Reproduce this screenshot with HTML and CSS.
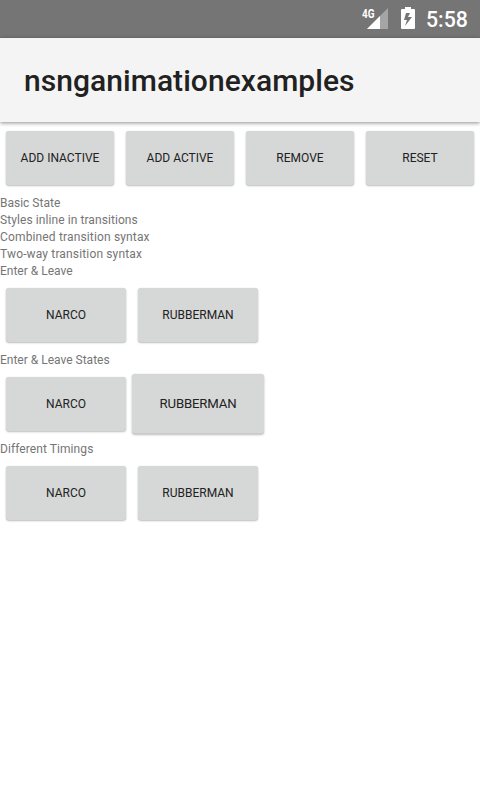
FILE: index.html
```html
<!DOCTYPE html>
<html lang="en">
<head>
<meta charset="utf-8">
<title>nsnganimationexamples</title>
<link rel="stylesheet" href="styles.css">
</head>
<body>
<div class="statusbar">
  <svg class="signal" width="28" height="24" viewBox="0 0 28 24" aria-hidden="true">
    <path d="M26 1V22H5Z" fill="#a5a5a5"/>
    <path d="M18 9V22H5Z" fill="#fff"/>
    <path d="M0 0H14V10L12 12H0Z" fill="#757575"/>
    <text class="network" x="0" y="10.500" textLength="12.500" lengthAdjust="spacingAndGlyphs">4G</text>
  </svg>
  <svg class="battery" width="14" height="22" viewBox="0 0 14 22" aria-hidden="true">
    <path fill="#fff" fill-rule="evenodd" d="M4 0h6v2h3q1 0 1 1v18q0 1-1 1H1q-1 0-1-1V3q0-1 1-1h3zM9 6H5L3 13h3l-2 6L11 10H7z"/>
  </svg>
  <span class="clock">5:58</span>
</div>
<header class="actionbar"><h1 class="title">nsnganimationexamples</h1></header>
<main class="content">
  <div class="row row-fill">
    <button class="btn">ADD INACTIVE</button>
    <button class="btn">ADD ACTIVE</button>
    <button class="btn">REMOVE</button>
    <button class="btn">RESET</button>
  </div>
  <p class="label">Basic State</p>
  <p class="label label-spaced">Styles inline in transitions</p>
  <p class="label label-wide">Combined transition syntax</p>
  <p class="label label-wide">Two-way transition syntax</p>
  <p class="label">Enter &amp; Leave</p>
  <div class="row">
    <button class="btn">NARCO</button>
    <button class="btn">RUBBERMAN</button>
  </div>
  <p class="label">Enter &amp; Leave States</p>
  <div class="row">
    <button class="btn">NARCO</button>
    <button class="btn btn-active">RUBBERMAN</button>
  </div>
  <p class="label label-spaced">Different Timings</p>
  <div class="row">
    <button class="btn">NARCO</button>
    <button class="btn">RUBBERMAN</button>
  </div>
</main>
</body>
</html>
```
FILE: styles.css
```css
* {
  box-sizing: border-box;
}

body {
  margin: 0;
  min-height: 800px;
  background: #fff;
  font-family: Roboto, sans-serif;
}

.statusbar {
  display: flex;
  align-items: flex-start;
  height: 38px;
  padding: 7px 12px 0 0;
  justify-content: flex-end;
  background: #757575;
  color: #fff;
}

.signal {
  margin-right: 11px;
}

.network {
  fill: #fff;
  font: 700 13px Roboto, sans-serif;
}

.battery {
  margin-right: 11px;
}

.clock {
  width: 42px;
  font-size: 21.3px;
  font-weight: 500;
  line-height: 26px;
}

.actionbar {
  display: flex;
  align-items: center;
  height: 84px;
  padding: 0 24px;
  background: #f4f4f4;
  box-shadow: 0 1px 4px rgba(0, 0, 0, 0.45);
}

.title {
  margin: 0;
  color: #212121;
  font-size: 30px;
  font-weight: 500;
  letter-spacing: 0.05px;
}

.row {
  display: flex;
  gap: 12px;
  height: 72px;
  padding: 9px 6px;
}

.btn {
  width: 120px;
  height: 54px;
  padding: 0;
  border: 0;
  border-radius: 3px;
  background: #d6d8d7;
  box-shadow: 0 0 1px rgba(0, 0, 0, 0.15), 0 1px 2px rgba(0, 0, 0, 0.25);
  color: #212121;
  font: 400 12px Roboto, sans-serif;
  white-space: nowrap;
}

.row-fill .btn {
  flex: 1;
}

.btn-active {
  transform: scale(1.1);
  letter-spacing: -0.15px;
}

.label {
  height: 17px;
  margin: 0;
  color: #757575;
  font-size: 12px;
  line-height: 19px;
}

.label-spaced {
  letter-spacing: 0.08px;
}

.label-wide {
  letter-spacing: 0.15px;
}
```
